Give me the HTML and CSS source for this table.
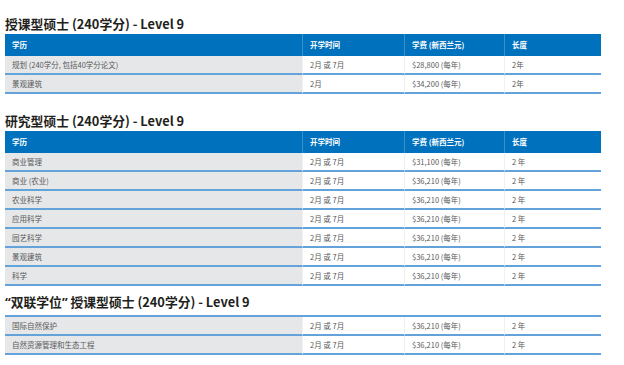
FILE: index.html
```html
<!DOCTYPE html>
<html lang="zh-CN">
<head>
  <meta charset="UTF-8" />
  <title>硕士课程 - Level 9</title>
  <link rel="stylesheet" href="styles.css">
</head>
<body>
  <section class="group">
    <h2>授课型硕士 (240学分) - Level 9</h2>
    <table class="fees">
      <thead>
        <tr>
          <th>学历</th>
          <th>开学时间</th>
          <th>学费 (新西兰元)</th>
          <th>长度</th>
        </tr>
      </thead>
      <tbody>
        <tr><td>规划 (240学分, 包括40学分论文)</td><td>2月 或 7月</td><td>$28,800 (每年)</td><td>2年</td></tr>
        <tr><td>景观建筑</td><td>2月</td><td>$34,200 (每年)</td><td>2年</td></tr>
      </tbody>
    </table>
  </section>

  <section class="group group-second">
    <h2>研究型硕士 (240学分) - Level 9</h2>
    <table class="fees">
      <thead>
        <tr>
          <th>学历</th>
          <th>开学时间</th>
          <th>学费 (新西兰元)</th>
          <th>长度</th>
        </tr>
      </thead>
      <tbody>
        <tr><td>商业管理</td><td>2月 或 7月</td><td>$31,100 (每年)</td><td>2 年</td></tr>
        <tr><td>商业 (农业)</td><td>2月 或 7月</td><td>$36,210 (每年)</td><td>2 年</td></tr>
        <tr><td>农业科学</td><td>2月 或 7月</td><td>$36,210 (每年)</td><td>2 年</td></tr>
        <tr><td>应用科学</td><td>2月 或 7月</td><td>$36,210 (每年)</td><td>2 年</td></tr>
        <tr><td>园艺科学</td><td>2月 或 7月</td><td>$36,210 (每年)</td><td>2 年</td></tr>
        <tr><td>景观建筑</td><td>2月 或 7月</td><td>$36,210 (每年)</td><td>2 年</td></tr>
        <tr><td>科学</td><td>2月 或 7月</td><td>$36,210 (每年)</td><td>2 年</td></tr>
      </tbody>
    </table>
  </section>

  <section class="group group-third">
    <h2><span class="quote">“</span>双联学位<span class="quote">”</span> 授课型硕士 (240学分) - Level 9</h2>
    <table class="fees fees-plain">
      <tbody>
        <tr><td>国际自然保护</td><td>2月 或 7月</td><td>$36,210 (每年)</td><td>2 年</td></tr>
        <tr><td>自然资源管理和生态工程</td><td>2月 或 7月</td><td>$36,210 (每年)</td><td>2 年</td></tr>
      </tbody>
    </table>
  </section>
</body>
</html>
```

FILE: styles.css
```css
body {
  margin: 0;
  padding: 15px 0 0 5px;
  background: #fff;
  font-family: 'Noto Sans CJK SC', 'Noto Sans', sans-serif;
  color: #231f20;
}

.group h2 {
  margin: 0 0 1px;
  font-size: 12.8px;
  line-height: 18px;
  font-weight: 700;
  color: #231f20;
}

.group h2 .quote {
  font-family: 'Noto Sans', sans-serif;
}

.group-second {
  margin-top: 18px;
}

.group-third {
  margin-top: 7px;
}

.group-third h2 {
  margin-bottom: 4px;
}

.fees {
  width: 596px;
  table-layout: fixed;
  border-collapse: separate;
  border-spacing: 0;
  font-size: 7.5px;
}

.fees th, .fees td {
  padding: 0 0 0 7px;
  text-align: left;
  white-space: nowrap;
}

.fees th:nth-child(1), .fees td:nth-child(1) { width: 290px; }
.fees th:nth-child(2), .fees td:nth-child(2) { width: 94px; }
.fees th:nth-child(3), .fees td:nth-child(3) { width: 92px; }

.fees th {
  height: 22px;
  line-height: 22px;
  background: #0071bc;
  color: #fff;
  font-weight: 700;
}

.fees th + th {
  border-left: 1px solid #3b8fcb;
}

.fees td {
  line-height: 17px;
  color: #58595b;
  background: #fff;
  border-bottom: 2px solid #63a3d9;
}

.fees td:first-child {
  background: #e6e7e8;
}

.fees td + td {
  border-left: 1px solid #f0f0f0;
}

.fees-plain {
  border-top: 2px solid #63a3d9;
}
```
